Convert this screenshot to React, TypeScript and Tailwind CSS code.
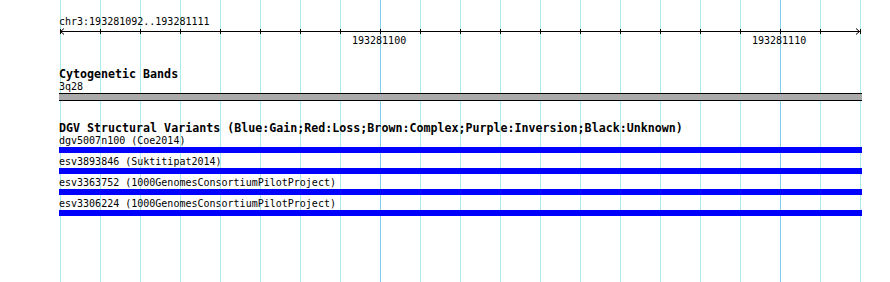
const gridX = Array.from({ length: 21 }, (_, i) => 60 + i * 40);
const majorX = [380, 780];

const variants = [
  { id: 'dgv5007n100', src: 'Coe2014' },
  { id: 'esv3893846', src: 'Suktitipat2014' },
  { id: 'esv3363752', src: '1000GenomesConsortiumPilotProject' },
  { id: 'esv3306224', src: '1000GenomesConsortiumPilotProject' },
];

const Grid = () => (
  <svg className="absolute inset-0" width={890} height={282}>
    {gridX.map((x) => (
      <rect
        key={x}
        x={x}
        y={0}
        width={1}
        height={282}
        fill={majorX.includes(x) ? '#82d0ee' : '#a8ecf2'}
      />
    ))}
  </svg>
);

// ruler: svg coords start at page x=59
const Ruler = () => (
  <div className="relative h-[40px] w-[803px]">
    <svg className="absolute left-0 top-0" width={803} height={8}>
      <rect x={1} y={3} width={800} height={1} fill="#000" />
      {gridX.map((x) => (
        <rect key={x} x={x - 59} y={1} width={1} height={5} fill="#000" />
      ))}
      <path d="M5 0.5 L1.5 3.5 L5 6.5" stroke="#000" fill="none" />
      <path d="M797 0.5 L800.5 3.5 L797 6.5" stroke="#000" fill="none" />
    </svg>
    <div className="absolute left-[293px] top-[7px] text-[10px] leading-[12px]">193281100</div>
    <div className="absolute left-[693px] top-[7px] text-[10px] leading-[12px]">193281110</div>
  </div>
);

const Title = ({ children }: { children: string }) => (
  <div className="h-[13px] whitespace-nowrap text-[11.65px] font-bold leading-[13px]">{children}</div>
);

const Label = ({ children }: { children: string }) => (
  <div className="h-[12px] whitespace-nowrap text-[10px] leading-[12px]">{children}</div>
);

export default function App() {
  return (
    <div
      className="relative h-[282px] w-[890px] overflow-hidden bg-white text-black"
      style={{ fontFamily: '"DejaVu Sans Mono", "Liberation Mono", monospace' }}
    >
      <Grid />
      <div className="relative flex flex-col pl-[59px] pt-[16px]">
        <Label>chr3:193281092..193281111</Label>
        <Ruler />

        <Title>Cytogenetic Bands</Title>
        <Label>3q28</Label>
        <div className="h-[8px] w-[803px] border-y border-black bg-[#aaaaaa]" />

        <div className="mt-[21px]">
          <Title>DGV Structural Variants (Blue:Gain;Red:Loss;Brown:Complex;Purple:Inversion;Black:Unknown)</Title>
        </div>
        {variants.map((v, i) => (
          <div key={v.id} className={i === 0 ? 'flex flex-col' : 'mt-[3px] flex flex-col'}>
            <Label>{`${v.id} (${v.src})`}</Label>
            <div className="h-[6px] w-[803px] bg-[#0000ff]" />
          </div>
        ))}
      </div>
    </div>
  );
}
